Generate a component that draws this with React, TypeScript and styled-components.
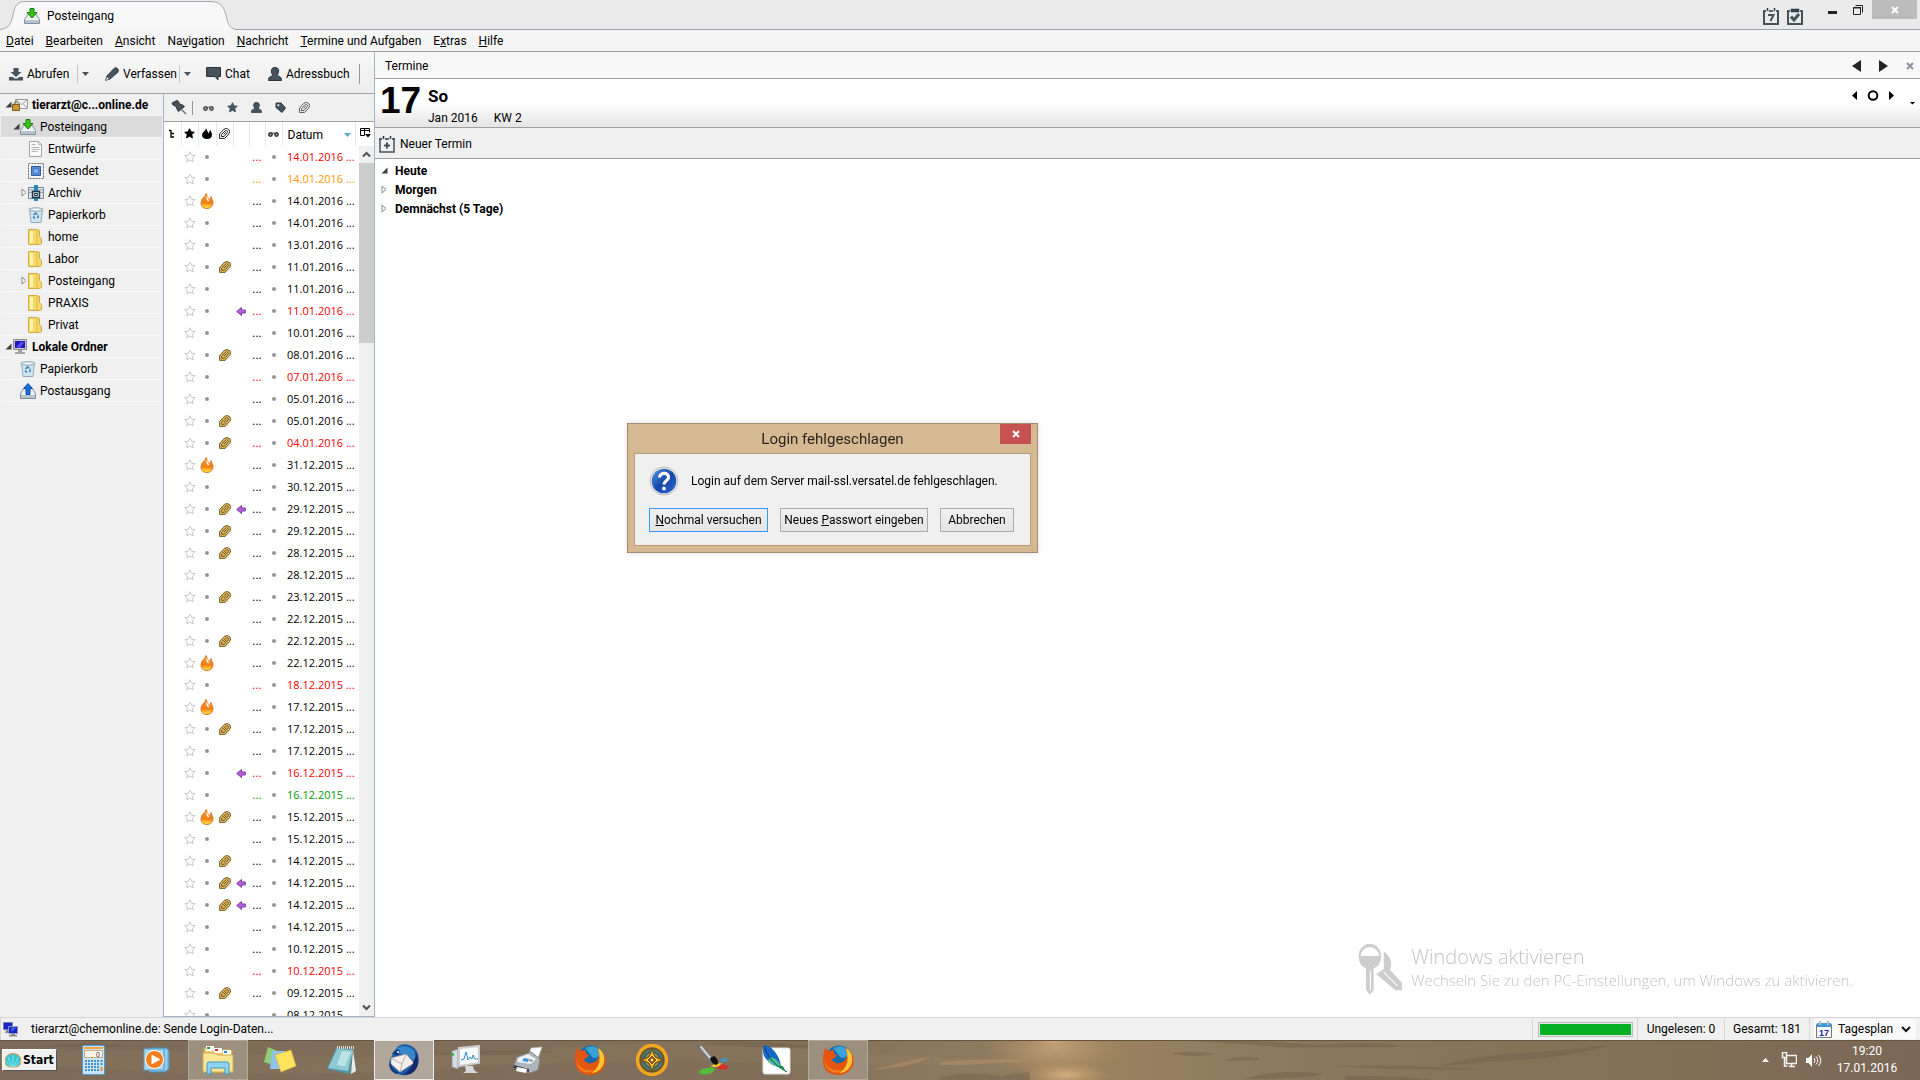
import React from "react";
import styled, { createGlobalStyle, css } from "styled-components";

const ui = `Roboto, "Open Sans", "Noto Sans", sans-serif`;
const light = `"Open Sans", "Noto Sans", sans-serif`;

const Global = createGlobalStyle`
  *, *::before, *::after { box-sizing: border-box; }
  html, body { margin: 0; height: 100%; overflow: hidden; }
  body { font: 12px/16px ${ui}; color: #000; background: #f0f0f0; }
  button, select { font: inherit; color: inherit; background: none; border: 0; padding: 0; margin: 0; }
  a { color: inherit; text-decoration: none; }
  svg { display: block; flex: none; }
`;

/* ---------- shell ---------- */
const Screen = styled.div`display: flex; flex-direction: column; height: 100vh;`;
const TabStrip = styled.header`
  display: flex; align-items: flex-start; justify-content: space-between;
  height: 30px; background: #eaeaea; border-bottom: 1px solid #98a4ac;
`;
const Tab = styled.button`
  position: relative; display: flex; align-items: center; gap: 7px;
  width: 236px; height: 30px; padding: 2px 0 0 24px; text-align: left;
  > svg:first-child { position: absolute; left: 0; top: 0; }
  > * { position: relative; }
`;
const WindowTools = styled.div`display: flex; align-items: flex-start; padding-right: 3px;`;
const CalTools = styled.div`display: flex; gap: 8px; padding: 8px 16px 0 0;`;
const Caption = styled.button<{ $close?: boolean }>`
  display: grid; place-items: center; height: 19px; width: ${p => (p.$close ? 45 : 26)}px;
  ${p => p.$close && css`background: #bcbcbc; margin-left: 1px;`}
`;
const MenuBar = styled.nav`
  display: flex; align-items: center; gap: 12px; height: 22px; padding: 0 6px;
  background: #f5f5f5; border-bottom: 1px solid #a0a0a0;
`;
const Main = styled.main`display: flex; flex: 1; min-height: 0; border-bottom: 1px solid #d7d7d7;`;
const MailSide = styled.section`
  display: flex; flex-direction: column; width: 375px; border-right: 1px solid #a3b3c9;
`;
const ToolBar = styled.div`
  display: flex; align-items: center; height: 42px; padding: 2px 0 0 9px;
  background: linear-gradient(#f8f8f8, #ededed); border-bottom: 1px solid #a0a0a0;
`;
const ToolButton = styled.button<{ $w: number }>`
  display: flex; align-items: center; gap: 4px; width: ${p => p.$w}px; white-space: nowrap;
`;
const DropButton = styled.button<{ $w: number }>`
  display: flex; align-items: center; padding-left: 4px; height: 18px; width: ${p => p.$w}px;
  border-left: 1px solid #c4c4c4;
`;
const Rule = styled.span<{ $h: number }>`width: 1px; height: ${p => p.$h}px; background: #999;`;
const MailBody = styled.div`display: flex; flex: 1; min-height: 0;`;

/* ---------- folders ---------- */
const Folders = styled.ul`
  width: 163px; margin: 0; padding: 0; list-style: none; background: #f0f0f0;
`;
const Folder = styled.li<{ $level: number; $on?: boolean; $bold?: boolean }>`
  display: flex; align-items: center; gap: 4px; height: 22px; margin: 0 1px;
  padding-left: ${p => 3 + p.$level * 8}px; white-space: nowrap;
  border-bottom: 1px solid #f7f7f7;
  background: ${p => (p.$on ? "#dbdbdb" : "transparent")};
  font-weight: ${p => (p.$bold ? 700 : 400)};
`;
const Twisty = styled.span`display: grid; place-items: center; width: 8px; margin-right: -4px; flex: none;`;

/* ---------- messages ---------- */
const Messages = styled.section`
  display: flex; flex-direction: column; flex: 1; min-width: 0; background: #fff;
  border-left: 1px solid #a3b3c9; border-bottom: 1px solid #a3b3c9;
`;
const FilterBar = styled.div`
  display: flex; align-items: center; gap: 10px; height: 28px; padding-left: 7px;
  background: #f0f0f0; border-bottom: 1px solid #a0a0a0;
`;
const FilterGroup = styled.div<{ $gap: number }>`display: flex; align-items: center; gap: ${p => p.$gap}px;`;
const ListArea = styled.div`display: flex; flex: 1; min-height: 0;`;
const ListClip = styled.div`flex: 1; min-width: 0; overflow: hidden;`;
const List = styled.table`
  width: 100%; table-layout: fixed; border-collapse: collapse;
  th { height: 24px; padding: 0 0 1px; font-weight: 400; border-right: 1px solid #dcebfa; }
  td { height: 22px; padding: 0; white-space: nowrap; overflow: hidden; }
  th > svg, td > svg { margin: auto; }
`;
const Col = styled.col<{ $w?: number }>`width: ${p => (p.$w ? `${p.$w}px` : "auto")};`;
const DateHead = styled.div`display: flex; align-items: center; justify-content: space-between; padding: 2px 4px 0 5px;`;
const Row = styled.tr<{ $c: string }>`
  color: ${p => p.$c};
  td:last-child { padding-left: 5px; font-family: ${light}; font-size: 11px; }
`;
const Dots = styled.td`text-align: center;`;
const Bullet = styled.span`display: block; width: 4px; height: 4px; margin: auto; border-radius: 50%; background: #969696;`;
const Rail = styled.div`display: flex; flex-direction: column; align-items: flex-end; width: 18px;`;
const Picker = styled.button`display: grid; place-items: center; width: 18px; height: 24px; padding-bottom: 3px;`;
const Scroll = styled.div`display: flex; flex-direction: column; flex: 1; width: 15px; background: #f0f0f0;`;
const ScrollButton = styled.button`display: grid; place-items: center; height: 17px;`;
const Track = styled.div`flex: 1;`;
const Thumb = styled.div`height: 21.5%; background: #cdcdcd;`;

/* ---------- calendar ---------- */
const Calendar = styled.aside`display: flex; flex-direction: column; flex: 1; background: #fff;`;
const CalHead = styled.div`
  display: flex; align-items: center; justify-content: space-between; height: 27px;
  padding: 2px 6px 0 10px; background: #f8f8f8; border-bottom: 1px solid #a0a0a0;
`;
const Arrows = styled.div<{ $gap: number }>`display: flex; align-items: center; gap: ${p => p.$gap}px;`;
const DayHead = styled.div`
  display: flex; align-items: flex-start; height: 49px; padding: 0 4px 0 5px;
  background: linear-gradient(#fff 50%, #e4e4e4); border-bottom: 1px solid #a0a0a0;
`;
const DayNumber = styled.div`width: 48px; font: 700 37px/43px "Liberation Sans", Arial, sans-serif;`;
const DayText = styled.div`flex: 1; padding-top: 6px;`;
const Weekday = styled.div`font-size: 17px; line-height: 22px; font-weight: 700;`;
const Month = styled.div`display: flex; gap: 16px; line-height: 22px;`;
const NewEvent = styled.button`
  display: flex; align-items: center; gap: 5px; height: 31px; padding: 2px 0 0 4px;
  background: #f0f0f0; border-bottom: 1px solid #a0a0a0;
`;
const Agenda = styled.ul`margin: 0; padding: 2px 0 0 5px; list-style: none; font-weight: 700;`;
const AgendaItem = styled.li`display: flex; align-items: center; gap: 11px; height: 19px;`;

/* ---------- status ---------- */
const Status = styled.footer`display: flex; align-items: center; height: 22px; background: #f0f0f0;`;
const StatusText = styled.div`flex: 1; padding-left: 10px;`;
const StatusCell = styled.div<{ $w: number }>`
  display: flex; align-items: center; justify-content: center; height: 22px;
  width: ${p => p.$w}px; border-left: 1px solid #d7d7d7;
`;
const Progress = styled.div`
  width: 95px; height: 15px; padding: 1px; border: 1px solid #bcbcbc; background: #e6e6e6;
  &::after { content: ""; display: block; height: 100%; background: #06b025; }
`;
const PlanButton = styled.button`
  display: flex; align-items: center; gap: 6px; height: 20px; width: 102px; padding-left: 2px;
  background: #fafafa; border-radius: 3px;
`;
const PlanArrow = styled.span`margin-left: 2px;`;

/* ---------- taskbar ---------- */
const TaskBar = styled.footer`
  position: relative; display: flex; align-items: center; height: 40px; overflow: hidden; color: #fff;
  background: linear-gradient(90deg, #7d6b57 0, #826f5a 40%, #907b60 52%, #98825f 58%, #8b7760 68%, #857358 80%, #7a6856 100%);
`;
const Water = styled.svg`position: absolute; inset: 0; width: 100%; height: 100%;`;
const StartButton = styled.button`
  position: relative; display: flex; align-items: center; gap: 2px; width: 55px; height: 22px; margin: 0 7px 0 2px;
  padding-left: 2px; color: #000; background: #f0f0f0;
  border: 1px solid; border-color: #fff #555 #555 #fff;
  font: 700 12px/16px "DejaVu Sans Condensed", "DejaVu Sans", sans-serif;
`;
const Tasks = styled.div`position: relative; display: flex; flex: 1; gap: 2px;`;
const Task = styled.button<{ $state?: "open" | "active" }>`
  display: grid; place-items: center; width: 60px; height: 40px;
  ${p => p.$state && css`
    border: 1px solid ${p.$state === "active" ? "#efece9" : "#b3a89a"};
    background: ${p.$state === "active" ? "#b1a69a" : "#9d8f7e"};
  `}
`;
const Tray = styled.div`position: relative; display: flex; align-items: center; gap: 8px; padding-right: 21px;`;
const TrayMore = styled.button`margin-right: 4px;`;
const Clock = styled.time`margin-left: 5px; width: 64px; line-height: 17px; text-align: center; white-space: nowrap;`;

/* ---------- overlays ---------- */
const Watermark = styled.div`
  position: fixed; right: 67px; bottom: 83px; display: flex; gap: 8px; color: #c4c4c4; pointer-events: none;
  font-family: ${light}; font-weight: 300; white-space: nowrap;
`;
const WaterTitle = styled.div`font-size: 20px; line-height: 28px;`;
const WaterText = styled.div`font-size: 15px; line-height: 18px;`;
const Dialog = styled.section`
  position: fixed; left: 627px; top: 423px; width: 411px; padding: 0 6px 6px;
  background: #d5b992; border: 1px solid #a68e6e; box-shadow: 0 0 5px rgba(0,0,0,.15);
`;
const DialogTitle = styled.h1`
  display: flex; justify-content: center; align-items: center; height: 29px; margin: 0;
  font-size: 15px; line-height: 20px; font-weight: 400; color: #2b2620;
`;
const DialogClose = styled.button`
  position: absolute; right: 6px; top: 0; display: grid; place-items: center; width: 31px; height: 20px; background: #c75050;
`;
const DialogBody = styled.div`padding: 12px 14px 13px; background: #f0f0f0; border: 1px solid #b89d78;`;
const Message = styled.p`display: flex; align-items: center; gap: 12px; margin: 0 0 12px; white-space: nowrap;`;
const Buttons = styled.div`display: flex; gap: 12px;`;
const DialogButton = styled.button<{ $w: number; $focus?: boolean }>`
  width: ${p => p.$w}px; height: 24px; white-space: nowrap;
  background: linear-gradient(#f0f0f0, #e5e5e5); border: 1px solid ${p => (p.$focus ? "#3399ff" : "#acacac")};
`;

/* ---------- icons ---------- */
const S = ({ w = 16, h = w, vb, children }: { w?: number; h?: number; vb?: string; children: React.ReactNode }) => (
  <svg width={w} height={h} viewBox={vb || `0 0 ${w} ${h}`} aria-hidden="true">{children}</svg>
);
const slate = "#46525c";
const TabShape = () => (
  <S w={236} h={30}><path d="M0 29.500C8 28.500 11 25 13 15C15 5 17 1.500 27 1.500H209C220 1.500 223 5 226 15C228 25 230 28.500 236 29.500V30H0Z" fill="#f8f8f8" /><path d="M0 29.500C8 28.500 11 25 13 15C15 5 17 1.500 27 1.500H209C220 1.500 223 5 226 15C228 25 230 28.500 236 29.500" fill="none" stroke="#a0abb8" /></S>
);
const Inbox = () => (
  <S><path d="M3.500 6.500h9l3 5v4H.5v-4z" fill="#e6ebf1" stroke="#8592a1" /><path d="M1 12h14v3H1z" fill="#b7c3cf" /><path d="M4 10h8l1 2H3z" fill="#fff" /><path d="M6 .5h4v4h3L8 10 3 4.500h3z" fill="#3cc414" stroke="#15800b" /></S>
);
const Outbox = () => (
  <S><path d="M3.500 5.500h9l3 5v5H.5v-5z" fill="#e8ecf1" stroke="#7e8c9d" /><path d="M1 12h14v3H1z" fill="#b7c3cf" /><path d="M4 9h8l1 3H3z" fill="#fff" /><path d="M6 11.500v-6H3.500L8 .5l4.500 5H10v6z" fill="#1c6fe0" stroke="#0c4aa5" /></S>
);
const Draft = () => (
  <S><path d="M1.500.5h9l3 3v12h-12z" fill="#fcfcfc" stroke="#a5a5a5" /><path d="M10.500.5v3h3M3.500 6.500h8M3.500 8.500h8M3.500 10.500h6M3.500 3.500h4" fill="none" stroke="#b5b5b5" /></S>
);
const Sent = () => (
  <S><path d="M.5.5h15v15H.5z" fill="#f4f4f4" stroke="#666" strokeDasharray="2 1" /><path d="M3.500 3.500h9v9h-9z" fill="#5b8edb" stroke="#2c62b4" /><circle cx="8" cy="8" r="3" fill="#7faceb" stroke="#416fb9" /></S>
);
const Archive = () => (
  <S><path d="M.5 2.500h15v11H.5z" fill="#dfe5ea" stroke="#788591" /><path d="M1 5h14M1 7.500h14" stroke="#98a4af" /><path d="M6 0h4v6H6zM6 12h4v4H6z" fill="#2689bf" /><path d="M4.500 6.500h7v6h-7z" fill="#cfd9e0" stroke="#22394a" strokeWidth="1.400" /><path d="M6.500 8.500h3v2h-3z" fill="#fff" stroke="#22394a" /></S>
);
const Trash = () => (
  <S><path d="M1.500 2h13l-1.500 13.500h-10z" fill="#cfe3ee" stroke="#93a9b5" /><ellipse cx="8" cy="2.500" rx="7" ry="1.700" fill="#edf6fa" stroke="#8fa3ae" /><path d="M5.500 8l2-2 2 1.500M10.500 8.500l-1 2.500M5 9.500l2 2" fill="none" stroke="#2b80bd" strokeWidth="1.500" /></S>
);
const FolderIcon = () => (
  <S><path d="M.5.500h8l3 1v6l2 2v5l-2 1H.5z" fill="#f5d868" stroke="#d3ab3f" /><path d="M2 2h3v12H2z" fill="#fff2b3" /><path d="M9 1.500v13.500" stroke="#e0b84a" /></S>
);
const Account = () => (
  <S><path d="M3.500 2.500h12v9h-12z" fill="#f4f4f4" stroke="#999" /><path d="M4 3l5.500 4.500L15 3M4 11l3.500-4M15 11l-3.500-4" fill="none" stroke="#9b9b9b" /><path d="M2 8V6q2-3 4 0v2" fill="none" stroke="#8a6d2e" /><path d="M.5 7.500h7v6h-7z" fill="#c79a3b" stroke="#7b5b1c" /></S>
);
const Computer = () => (
  <S><path d="M1.500.5h13v10h-13z" fill="#c9c9c9" stroke="#8d8d8d" /><path d="M3 2h10v7H3z" fill="#2414c7" /><path d="M4 8l5-5h3L8 9z" fill="#5c4ff2" /><path d="M6 11h4v2h3v2H3v-2h3z" fill="#a2a2a2" /></S>
);
const Open = () => <S w={7} h={7}><path d="M6.500.5v6h-6z" fill="#404040" /></S>;
const Closed = () => <S w={6} h={9}><path d="M1 1l4 3.500L1 8z" fill="#fff" stroke="#8a8a8a" /></S>;
const Tri = ({ d, w, h, c = "#222" }: { d: "l" | "r" | "d" | "u"; w: number; h: number; c?: string }) => (
  <S w={w} h={h}><path fill={c} d={{ l: `M${w} 0V${h}L0 ${h / 2}z`, r: `M0 0V${h}L${w} ${h / 2}z`, d: `M0 0H${w}L${w / 2} ${h}z`, u: `M0 ${h}H${w}L${w / 2} 0z` }[d]} /></S>
);
const starPath = "M6 .8l1.600 3.400 3.600.4-2.700 2.500.7 3.700L6 9l-3.200 1.800.7-3.700L.8 4.600l3.600-.4z";
const StarIcon = ({ fill, w = 11 }: { fill: string; w?: number }) => <S w={w} h={w} vb="0 0 12 12"><path d={starPath} fill={fill} stroke={fill === "#fff" ? "#c6c6c6" : fill} /></S>;
const Clip = ({ c, w = 12, back = "none" }: { c: string; w?: number; back?: string }) => (
  <S w={w} h={w} vb="0 0 12 12"><path d="M.6 11.400V6.600L5.400 1.300Q8.200-.4 10.600 1.600T10.700 6.500L6.200 11.400z" fill={back} stroke={c} strokeLinejoin="round" /><path d="M2.700 9.300V7.200L6.600 3.200Q8 2.300 9 3.300t0 1.700L5.500 9.300zM5 7l2.300-2.200" fill="none" stroke={c} /></S>
);
const Flame = () => (
  <S w={14} h={16}><defs><linearGradient id="fl" x2="0" y2="1"><stop stopColor="#f9a24a" /><stop offset=".6" stopColor="#f47a13" /><stop offset=".9" stopColor="#ffd33c" /></linearGradient></defs><path d="M6 .5C6 3 1 5 1 10c0 4 3 5.500 6 5.500s6-2 6-6C13 7 11.500 6 11 3.500 10.500 5 10 6 9.500 7 8 6 7.500 3 6 .5z" fill="url(#fl)" stroke="#dc7a28" /><path d="M7 2c.5 2 1 4 2.500 6-2 1-4-1-2.500-6z" fill="#fff3d4" /></S>
);
const FlameSmall = () => <S w={10} h={11}><path d="M4 0C4 3 0 4 0 7c0 2.500 2 4 5 4s5-1.500 5-4.500C10 5 9 4 8.500 2 7.500 3 7 4 7 5.500 5.500 4 5 2 4 0z" fill="#000" /></S>;
const Reply = () => <S w={10} h={9}><path d="M.7 4.500L5.500.5v2.500h3.800v3H5.500v2.500z" fill="#b65fe0" stroke="#7e3ea3" /></S>;
const Glasses = ({ c = slate }: { c?: string }) => <S w={11} h={6}><circle cx="2.500" cy="3.500" r="1.700" fill="#aaa" stroke={c} strokeWidth="1.500" /><circle cx="8.500" cy="3.500" r="1.700" fill="#aaa" stroke={c} strokeWidth="1.500" /><path d="M4 2.500q1.500-1 3 0" fill="none" stroke={c} /></S>;
const Person = ({ w }: { w: number }) => <S w={w} h={w} vb="0 0 14 14"><path d="M7 .5c3 0 4 2 3.500 4.500C10 7 9.500 7.500 9.500 8.500c1 1 4 1 4 4v1H.5v-1c0-3 3-3 4-4C4.500 7.500 4 7 3.500 5 3 2.500 4 .5 7 .5z" fill={slate} stroke="#2d363e" /></S>;
const Download = () => <S w={14} h={14}><path d="M4.500 1h5v4h3L7 10 1.500 5h3z" fill={slate} /><path d="M0 10h4l1.500 1.500h3L10 10h4v3.500H0z" fill={slate} /></S>;
const Pencil = () => <S w={14} h={14}><path d="M.7 13.300l1-4L9 1.500q2-1.500 3.500 0t.5 3.500L5 12z" fill={slate} stroke="#2d363e" /><path d="M1 13l1-3 2 2z" fill="#eee" /></S>;
const Chat = () => <S w={15} h={15}><path d="M.5 1.500h14v9h-2.500V14L9 10.500H.5z" fill={slate} stroke="#2d363e" /></S>;
const Pin = () => <S w={16} h={15}><path d="M1 3l5-2.500 1.500 1 1 2.500 3 1 2 1.500-6 5-1.500-2.500-1-2.500-3-1.500z" fill={slate} stroke="#2d363e" /><path d="M10 9l5 5" stroke="#6d767e" strokeWidth="1.500" /></S>;
const Tag = () => <S w={11} h={11}><path d="M1 1h5l4.500 5L7 10.500 1 5.500z" fill={slate} stroke="#2d363e" /><circle cx="3.300" cy="3.200" r="1" fill="#fff" /></S>;
const Thread = () => <S w={6} h={9}><path d="M0 1.500h2M2 1v7h3M2 4.500h3" fill="none" stroke="#000" strokeWidth="1.300" /></S>;
const PickerIcon = () => <S w={11} h={10}><path d="M.5 7.500v-7h9v4M.5 2.500h9M4.500.5v7H.5" fill="none" stroke="#000" /><path d="M5 6h6L8 9.500z" /></S>;
const Cal = ({ kind }: { kind: "7" | "+" | "check" }) => (
  <S w={16} h={17}><path d="M1 3v13h14V3" fill="none" stroke={slate} strokeWidth={kind === "+" ? 1.5 : 2} /><path d={kind === "check" ? "M0 3h3M13 3h3M4.500 1.500h7v2h-7z" : "M0 3h3M6 3h4M13 3h3M4.500 0v3M11.500 0v3"} fill={slate} stroke="#2f3a44" strokeWidth="1.500" />
    <path d={kind === "7" ? "M5 7h5.500L7.500 13" : kind === "+" ? "M8 6.500v6M5 9.500h6" : "M4 8.500l3 3.500 5-6"} fill="none" stroke={slate} strokeWidth={kind === "check" ? 3 : 2} /></S>
);
const X = ({ c, w = 8, sw = 2 }: { c: string; w?: number; sw?: number }) => <S w={w}><path d={`M1 1L${w - 1} ${w - 1}M${w - 1} 1L1 ${w - 1}`} stroke={c} strokeWidth={sw} /></S>;
const Chevron = ({ up }: { up?: boolean }) => <S w={9} h={7}><path d={up ? "M1 5.500L4.500 2 8 5.500" : "M1 1.500L4.500 5 8 1.500"} fill="none" stroke="#505050" strokeWidth="2" /></S>;
const Question = () => (
  <S w={30}><defs><linearGradient id="q" x2="1" y2="1"><stop stopColor="#5b9be0" /><stop offset=".5" stopColor="#1546aa" /><stop offset="1" stopColor="#2a68cc" /></linearGradient></defs><circle cx="15" cy="15" r="14" fill="#e9e9e9" stroke="#bbb" /><circle cx="15" cy="15" r="12.300" fill="url(#q)" /><path d="M10.500 11.500c.3-5.500 9.500-5.300 9 0-.3 3-4.500 3.500-4.500 7" fill="none" stroke="#fff" strokeWidth="3.200" /><circle cx="15" cy="22.500" r="1.900" fill="#fff" /></S>
);
const NetPcs = () => <S w={16} h={15}><path d="M.5.500h9v7h-9z" fill="#1726c9" stroke="#7486a8" /><path d="M3 8h4v3H2z" fill="#888" /><path d="M5.500 4.500h9v7h-9z" fill="#1726c9" stroke="#8d9bb5" /><path d="M8 6l5-1-4 5z" fill="#4664f5" /><path d="M8 12h4v1h2v1.500H6V13h2z" fill="#888" /></S>;
const PlanIcon = () => <S w={16} h={17}><path d="M.5 3.500h15v13H.5z" fill="#fff" stroke="#777" /><path d="M1 2h14v4H1z" fill="#3d9be0" /><path d="M4 0v4M12 0v4" stroke="#bbb" strokeWidth="2" /><text x="8" y="14.500" textAnchor="middle" fontFamily="Liberation Sans" fontWeight="700" fontSize="9" fill="#1a1aa6">17</text></S>;
const Keys = () => (
  <S w={46} h={54} vb="0 0 43 50"><g fill="#cdcdcd"><path d="M25 8c7 4 8 11 6 17l11 12v7h-6L18 29l7-5z" /><path d="M12 0a11.500 11.500 0 0 1 11 12q0 9-7 12v20l-4 5-4-5V24Q1 21 1 12A11.500 11.500 0 0 1 12 0z" stroke="#fff" /></g><path d="M3.500 12a8.500 8.500 0 0 1 17 0z" fill="#fff" /><path d="M12.500 26v18M25 27l13 13" stroke="#fff" /></S>
);
const Shell = () => <S w={16} h={15}><path d="M5 14q-5-1-5-6Q0 1 8 .5 16 1 16 8q0 5-5 6z" fill="#35c6cf" stroke="#e59a45" /><path d="M8 14V2M7 14L3 4M9 14l4-10M6 14L1 8M10 14l5-6" stroke="#9ff0f0" strokeWidth=".8" /></S>;

const Calculator = () => <S w={24} h={30}><rect x=".5" y=".5" width="22" height="29" rx="1.500" fill="#c8e4f6" stroke="#4f9ccd" /><path d="M2 3h19" stroke="#f5a13c" strokeWidth="2" /><path d="M2.500 5.500h18v7h-18z" fill="#fff6e6" stroke="#c4a884" /><text x="14" y="12" fontSize="7" fontFamily="Liberation Sans" fill="#333">0</text>{[16, 19, 22, 25].map(y => <path key={y} d={`M3 ${y}h14`} stroke="#4b93c5" strokeWidth="2" strokeDasharray="2 1" />)}<path d="M19.500 15v6" stroke="#4b93c5" strokeWidth="2" strokeDasharray="2 1" /><path d="M19.500 22v4" stroke="#f29023" strokeWidth="2" /></S>;
const Player = () => <S w={27} h={26}><path d="M6 1h18l2 3v18l-4 3H6z" fill="#7dbde0" stroke="#488eb7" /><path d="M23 3v20" stroke="#b7e0f3" /><path d="M1 2h20v21H1z" fill="#a7d8ef" stroke="#5aa3ca" /><circle cx="11.500" cy="12.500" r="9" fill="#f57c19" stroke="#fff" /><path d="M8.500 7.500v10l9-5z" fill="#fff" /></S>;
const Explorer = () => <S w={32} h={30}><path d="M2 3h8l2 2h18v22H2z" fill="#eccb6b" stroke="#c89e3a" /><path d="M4 1h8v5H4zM12 3h8v5h-8zM21 5h8v5h-8z" fill="#fff" /><path d="M5 2h3v2H5z" fill="#17a232" /><path d="M13 4h3v2h-3z" fill="#d8302c" /><path d="M22 6h3v2h-3z" fill="#2b83d1" /><path d="M1 8h12l2 2h16v17H1z" fill="#fae697" stroke="#d2ad4f" /><path d="M5 29V19q0-2 2-2h18q2 0 2 2v10h-4v-6H9v6z" fill="#8fd3f1" stroke="#4298c4" /></S>;
const Notes = () => <S w={33} h={28}><path d="M4 1l12 5-4 14L0 16z" fill="#91cf76" /><path d="M8 5h13l-2 18H6z" fill="#8fc2ee" /><path d="M11 9l16-5 5 16-15 6z" fill="#ffe45e" stroke="#d9b63a" strokeWidth=".6" /></S>;
const Notepad = () => <S w={32} h={30}><path d="M10 3l17 1-3 25L1 24z" fill="#4e97a8" /><path d="M11 4l16 1-5 21L2 23z" fill="#8fc9d2" /><path d="M16 6l9 1-6 14-8-1z" fill="#bce3e6" /><path d="M27 5l3 21-5 3z" fill="#e7eef0" /><path d="M11 2.500h17" stroke="#ddd" strokeWidth="3" strokeDasharray="1 1" /></S>;
const Bird = () => (
  <S w={34} h={34}>
    <path d="M9 6C12 0 22 0 27 5c6 5 6 15 2 21-4 6-12 8-18 5C4 29 1 22 3 16z" fill="#1c5ba8" />
    <path d="M5 11C8 3 19 1 25 6c6 4 7 12 5 18-2-5-5-9-10-11-5-3-10-3-15-2z" fill="#3a86cb" />
    <path d="M5 11l5-5 3 2-2 4z" fill="#12396f" /><circle cx="11" cy="9" r="1" fill="#fff" />
    <path d="M4 15l15-4 8 9-14 9-9-8z" fill="#f5efe9" stroke="#a39d97" strokeWidth=".6" /><path d="M4 15l11 6 4-10M15 21l-2 8" fill="none" stroke="#a7a09a" strokeWidth=".8" />
    <path d="M27 17q-2 10-11 14 12 2 15-10 1-9-4-13 3 4 0 9z" fill="#16296d" /><path d="M2 20q0 8 7 11l3-1q-7-3-8-9z" fill="#123a7c" />
  </S>
);
const Monitor = () => <S w={32} h={30}><path d="M2 6l6-2v20l-6-2z" fill="#d7dbe0" stroke="#8d949c" /><path d="M9 3l20-2v17l-20 3z" fill="#f7fbff" stroke="#ccc" strokeWidth="2" /><path d="M11 15l3-1 2-7 2 8 2-3 2 2 1-4 2 4h3" fill="none" stroke="#2b8bc5" /><path d="M15 21h8l1 4 4 3H13l3-2z" fill="#d5d8dc" /><path d="M2 8h2v3H2z" fill="#2cc32c" /></S>;
const Fax = () => <S w={32} h={28}><path d="M19 2l11-1-5 14-10-1z" fill="#fafafa" stroke="#bbb" strokeWidth=".6" /><path d="M5 11l14-5 9 7-2 11-8 3L1 22z" fill="#aeb5ba" stroke="#7f868b" /><path d="M6 12l10-4 8 5-5 5-14-2z" fill="#edf1f3" /><path d="M12 12l5 1-1 3-6-1z" fill="#3c94d0" /><path d="M18 13l3 1-1 2-3-1z" fill="#8b959c" /><path d="M2 19l15 4v3L1 22z" fill="#39424a" /><path d="M5 21l10 2-1 4-10-2z" fill="#fff" /></S>;
const Firefox = () => <S w={32}><circle cx="17" cy="15" r="13.500" fill="#1668aa" /><path d="M11 4q12-5 16 5-1 5-8 5z" fill="#36a2d8" /><path d="M2 8l1-4 4 3 5-1c-1 3 0 4 3 5-1 3-4 3-5 5 2 4 9 4 12 1 5-5 3-9 1-13 8 4 10 11 8 17-2 6-8 10-14 10C7 31 1 26 1 17c0-4 0-6 1-9z" fill="#e4550f" /><path d="M24 4c7 4 8 13 4 19-3 4-7 6-11 6 7-4 11-11 7-25z" fill="#fcc62f" /><path d="M2 15c2 9 10 13 18 11-7 6-17 1-18-11z" fill="#f5801f" /></S>;
const Compass = () => <S w={32}><circle cx="16" cy="16" r="14.500" fill="#477b7c" stroke="#f6a51c" strokeWidth="3.500" /><circle cx="16" cy="16" r="11.500" fill="none" stroke="#7c4e0d" strokeWidth="1.500" /><circle cx="16" cy="16" r="8" fill="#a48a3c" stroke="#2c5e66" strokeWidth="1.500" /><path d="M16 5l3 8 8 3-8 3-3 8-3-8-8-3 8-3z" fill="#e9a92a" stroke="#714a12" /><path d="M16 11l5 5-5 5-5-5z" fill="#8a4f16" stroke="#ffe064" /><circle cx="16" cy="16" r="1.500" fill="#ffe064" /></S>;
const Brush = () => <S w={32} h={32}><ellipse cx="9" cy="27" rx="8" ry="3" fill="#55bb3c" transform="rotate(-12 9 27)" /><ellipse cx="25" cy="23" rx="5" ry="2.500" fill="#dd2c2c" /><ellipse cx="26" cy="16" rx="3.500" ry="1.700" fill="#2e9edb" transform="rotate(-20 26 16)" /><path d="M12 22q8 3 12-3l-6 1z" fill="#f0d220" /><path d="M3 3l11 14" stroke="#777" strokeWidth="5" strokeLinecap="round" /><path d="M3 3l11 13" stroke="#d2d2d2" strokeWidth="2" strokeLinecap="round" /><path d="M12 14l4-2q6 4 3 9-6-1-7-7z" fill="#111" /></S>;
const Feather = () => <S w={30} h={32}><rect x="2" y="4" width="27" height="26" rx="2" fill="#fff" stroke="#ddd" /><path d="M3 1q7 1 11 7 5 6 6 15-8 0-14-7-6-6-3-15z" fill="#1768c0" /><path d="M9 13q8 1 11 10-8 0-13-6z" fill="#4dbd8c" /><path d="M3 2q5 17 23 26" fill="none" stroke="#0c3f8c" /><path d="M15 21l10 7-3-6z" fill="#219151" /></S>;
const Net = () => <S w={16}><path d="M5.500 3.500h10v8h-10zM8 14.500h6M10.500 12v2M1.500.5h4v5h-4zM3.500 6v8h3" fill="none" stroke="#f3f3f3" strokeWidth="1.500" /></S>;
const Speaker = () => <S w={17} h={15}><path d="M1 5h2.500L7 1v13L3.500 10H1z" fill="#fff" /><path d="M9 5q2 2.500 0 5M11 3.500q3.500 4 0 8M13.500 2q4.500 5.500 0 11" fill="none" stroke="#fff" /></S>;

/* ---------- data ---------- */
const menus: [string, string, string][] = [["", "D", "atei"], ["", "B", "earbeiten"], ["", "A", "nsicht"], ["Na", "v", "igation"], ["", "N", "achricht"], ["", "T", "ermine und Aufgaben"], ["E", "x", "tras"], ["", "H", "ilfe"]];

type F = { n: string; i: React.ReactNode; l: number; t?: "o" | "c"; on?: boolean; b?: boolean };
const folders: F[] = [
  { n: "tierarzt@c...online.de", i: <Account />, l: 0, t: "o", b: true },
  { n: "Posteingang", i: <Inbox />, l: 1, t: "o", on: true },
  { n: "Entwürfe", i: <Draft />, l: 2 },
  { n: "Gesendet", i: <Sent />, l: 2 },
  { n: "Archiv", i: <Archive />, l: 2, t: "c" },
  { n: "Papierkorb", i: <Trash />, l: 2 },
  { n: "home", i: <FolderIcon />, l: 2 },
  { n: "Labor", i: <FolderIcon />, l: 2 },
  { n: "Posteingang", i: <FolderIcon />, l: 2, t: "c" },
  { n: "PRAXIS", i: <FolderIcon />, l: 2 },
  { n: "Privat", i: <FolderIcon />, l: 2 },
  { n: "Lokale Ordner", i: <Computer />, l: 0, t: "o", b: true },
  { n: "Papierkorb", i: <Trash />, l: 1 },
  { n: "Postausgang", i: <Outbox />, l: 1 },
];

/* date, then flags: r/o/g text colour, f flame, c attachment, a replied */
const mails = `14.01.2016 r|14.01.2016 o|14.01.2016 f|14.01.2016|13.01.2016|11.01.2016 c|11.01.2016|11.01.2016 ra|10.01.2016|08.01.2016 c|07.01.2016 r|05.01.2016|05.01.2016 c|04.01.2016 rc|31.12.2015 f|30.12.2015|29.12.2015 ca|29.12.2015 c|28.12.2015 c|28.12.2015|23.12.2015 c|22.12.2015|22.12.2015 c|22.12.2015 f|18.12.2015 r|17.12.2015 f|17.12.2015 c|17.12.2015|16.12.2015 ra|16.12.2015 g|15.12.2015 fc|15.12.2015|14.12.2015 c|14.12.2015 ca|14.12.2015 ca|14.12.2015|10.12.2015|10.12.2015 r|09.12.2015 c|08.12.2015`
  .split("|").map(m => { const [date, flags = ""] = m.split(" "); return { date, flags }; });
const tint = (f: string) => (f.includes("r") ? "#f00" : f.includes("o") ? "#f90" : f.includes("g") ? "#009900" : "#000");

const tasks: { n: string; i: React.ReactNode; s?: "open" | "active" }[] = [
  { n: "Rechner", i: <Calculator /> }, { n: "Media Player", i: <Player /> }, { n: "Explorer", i: <Explorer />, s: "open" },
  { n: "Kurznotizen", i: <Notes /> }, { n: "Editor", i: <Notepad /> }, { n: "Thunderbird", i: <Bird />, s: "active" },
  { n: "Systemmonitor", i: <Monitor /> }, { n: "Fax", i: <Fax /> }, { n: "Firefox", i: <Firefox /> },
  { n: "Kompass", i: <Compass /> }, { n: "Malen", i: <Brush /> }, { n: "Feder", i: <Feather /> }, { n: "Firefox-Fenster", i: <Firefox />, s: "open" },
];

export default function App() {
  return (
    <Screen>
      <Global />
      <TabStrip>
        <Tab><TabShape /><Inbox /><span>Posteingang</span></Tab>
        <WindowTools>
          <CalTools><button aria-label="Kalender"><Cal kind="7" /></button><button aria-label="Aufgaben"><Cal kind="check" /></button></CalTools>
          <Caption aria-label="Minimieren"><S w={9} h={9}><path d="M0 6h9v3H0z" fill="#222" /></S></Caption>
          <Caption aria-label="Wiederherstellen"><S w={10} h={10}><path d="M.5 3h7v6.500h-7z" fill="none" stroke="#222" /><path d="M0 2.500h8M2.500.5h7v7" fill="none" stroke="#222" /></S></Caption>
          <Caption $close aria-label="Schließen"><X c="#fff" /></Caption>
        </WindowTools>
      </TabStrip>
      <MenuBar>{menus.map(([a, u, b]) => <a href="#" key={a + u + b}>{a}<u>{u}</u>{b}</a>)}</MenuBar>

      <Main>
        <MailSide>
          <ToolBar>
            <ToolButton $w={68}><Download />Abrufen</ToolButton>
            <DropButton $w={28} aria-label="Abrufen-Menü"><Tri d="d" w={7} h={4} c={slate} /></DropButton>
            <ToolButton $w={74}><Pencil />Verfassen</ToolButton>
            <DropButton $w={27} aria-label="Verfassen-Menü"><Tri d="d" w={7} h={4} c={slate} /></DropButton>
            <ToolButton $w={62}><Chat />Chat</ToolButton>
            <ToolButton $w={91}><Person w={14} />Adressbuch</ToolButton>
            <Rule $h={20} />
          </ToolBar>
          <MailBody>
            <Folders>
              {folders.map((f, i) => (
                <Folder key={i} $level={f.l} $on={f.on} $bold={f.b}>
                  <Twisty>{f.t === "o" ? <Open /> : f.t === "c" ? <Closed /> : null}</Twisty>
                  {f.i}{f.n}
                </Folder>
              ))}
            </Folders>
            <Messages>
              <FilterBar>
                <FilterGroup $gap={5}><button aria-label="Anheften"><Pin /></button><Rule $h={14} /></FilterGroup>
                <FilterGroup $gap={13}>
                  <button aria-label="Ungelesen"><Glasses /></button><button aria-label="Gekennzeichnet"><StarIcon fill={slate} /></button>
                  <button aria-label="Kontakt"><Person w={11} /></button><button aria-label="Schlagwort"><Tag /></button>
                  <button aria-label="Anhang"><Clip c={slate} w={11} /></button>
                </FilterGroup>
              </FilterBar>
              <ListArea>
                <ListClip>
                  <List>
                    <colgroup><Col $w={17} /><Col $w={17} /><Col $w={18} /><Col $w={17} /><Col $w={16} /><Col $w={16} /><Col $w={17} /><Col /></colgroup>
                    <thead><tr>
                      <th aria-label="Thema"><Thread /></th><th aria-label="Stern"><StarIcon fill="#000" /></th><th aria-label="Junk"><FlameSmall /></th>
                      <th aria-label="Anhang"><Clip c="#111" w={11} /></th><th /><th /><th aria-label="Gelesen"><Glasses c="#333" /></th>
                      <th><DateHead>Datum<Tri d="d" w={7} h={4} c="#5fa9c9" /></DateHead></th>
                    </tr></thead>
                    <tbody>
                      {mails.map((m, i) => (
                        <Row key={i} $c={tint(m.flags)}>
                          <td /><td><StarIcon fill="#fff" w={12} /></td>
                          <td>{m.flags.includes("f") ? <Flame /> : <Bullet />}</td>
                          <td>{m.flags.includes("c") && <Clip c="#7d6023" back="#d8b565" />}</td>
                          <td>{m.flags.includes("a") && <Reply />}</td>
                          <Dots>...</Dots>
                          <td><Bullet /></td>
                          <td>{m.date} ...</td>
                        </Row>
                      ))}
                    </tbody>
                  </List>
                </ListClip>
                <Rail>
                  <Picker aria-label="Spalten wählen"><PickerIcon /></Picker>
                  <Scroll>
                    <ScrollButton aria-label="Nach oben"><Chevron up /></ScrollButton>
                    <Track><Thumb /></Track>
                    <ScrollButton aria-label="Nach unten"><Chevron /></ScrollButton>
                  </Scroll>
                </Rail>
              </ListArea>
            </Messages>
          </MailBody>
        </MailSide>

        <Calendar>
          <CalHead>Termine
            <Arrows $gap={18}>
              <button aria-label="Zurück"><Tri d="l" w={9} h={12} /></button>
              <button aria-label="Weiter"><Tri d="r" w={9} h={12} /></button>
              <button aria-label="Bereich schließen"><X c="#8a93a0" /></button>
            </Arrows>
          </CalHead>
          <DayHead>
            <DayNumber>17</DayNumber>
            <DayText><Weekday>So</Weekday><Month><span>Jan 2016</span><span>KW 2</span></Month></DayText>
            <Arrows $gap={11}>
              <S w={64} h={32}><path d="M5 12v9L0 16.500zM37 12v9l5-4.500zM58 23h5l-2.500 2.500z" /><circle cx="21" cy="16.500" r="4.300" fill="none" stroke="#000" strokeWidth="2" /></S>
            </Arrows>
          </DayHead>
          <NewEvent><Cal kind="+" />Neuer Termin</NewEvent>
          <Agenda>
            <AgendaItem><Twisty><Open /></Twisty>Heute</AgendaItem>
            <AgendaItem><Twisty><Closed /></Twisty>Morgen</AgendaItem>
            <AgendaItem><Twisty><Closed /></Twisty>Demnächst (5 Tage)</AgendaItem>
          </Agenda>
        </Calendar>
      </Main>

      <Status>
        <StatusCell $w={21}><NetPcs /></StatusCell>
        <StatusText>tierarzt@chemonline.de: Sende Login-Daten...</StatusText>
        <StatusCell $w={105}><Progress role="progressbar" aria-label="Fortschritt" /></StatusCell>
        <StatusCell $w={87}>Ungelesen: 0</StatusCell>
        <StatusCell $w={85}>Gesamt: 181</StatusCell>
        <StatusCell $w={111}><PlanButton><PlanIcon />Tagesplan<PlanArrow><S w={10} h={7}><path d="M1 1l4 4 4-4" fill="none" stroke="#111" strokeWidth="2" /></S></PlanArrow></PlanButton></StatusCell>
      </Status>

      <TaskBar>
        <Water viewBox="0 0 1920 40" preserveAspectRatio="none" aria-hidden="true">
          <defs><radialGradient id="sun"><stop stopColor="#d6b384" stopOpacity=".95" /><stop offset="1" stopColor="#c79a62" stopOpacity="0" /></radialGradient></defs>
          <path d="M0 14q120-8 260 0t300-6 300 6l160 6q-120 8-260 3T420 30 0 22z" fill="#a08a6b" opacity=".15" />
          <ellipse cx="1055" cy="8" rx="70" ry="30" fill="url(#sun)" opacity=".7" /><ellipse cx="1054" cy="0" rx="20" ry="6" fill="url(#sun)" /><ellipse cx="1066" cy="35" rx="46" ry="13" fill="url(#sun)" />
          <path d="M940 22q60-5 90-1-50 4-90 4zM870 30l60-14q-10 10-60 14z" fill="#c09c6e" opacity=".4" />
          <g fill="#6f5d49" opacity=".4"><path d="M940 37q30-6 60-1l30-4v8H940zM1195 2q60-3 120 3 70-5 85 2-80 0-110 1-50-5-95-6zM1172 13q20-3 44 1-20 4-44 0zM1232 18q15-3 27 0v2l-36 1zM1265 34q30-4 58 0-20 5-80 5zM1330 26q60-2 150 3-70 2-150-3zM1440 26q40-12 100-14 50-4 70-7-30 10-80 14t-90 7zM1345 36q60 0 90 4h-90zM700 4q40-4 90 0t80 3q-60 4-170-3zM40 6q50-5 90 0-40 3-90 0zM430 14q60-6 130-2-60 5-130 2z" /></g>
          <path d="M0 .5h1920" stroke="#66543f" />
        </Water>
        <StartButton><Shell />Start</StartButton>
        <Tasks>{tasks.map(t => <Task key={t.n} $state={t.s} aria-label={t.n}>{t.i}</Task>)}</Tasks>
        <Tray>
          <TrayMore aria-label="Ausgeblendete Symbole"><Tri d="u" w={7} h={4} c="#fff" /></TrayMore>
          <Net /><Speaker />
          <Clock>19:20<br />17.01.2016</Clock>
        </Tray>
      </TaskBar>

      <Watermark><Keys /><div><WaterTitle>Windows aktivieren</WaterTitle><WaterText>Wechseln Sie zu den PC-Einstellungen, um Windows zu aktivieren.</WaterText></div></Watermark>

      <Dialog role="dialog" aria-label="Login fehlgeschlagen">
        <DialogTitle>Login fehlgeschlagen</DialogTitle>
        <DialogClose aria-label="Dialog schließen"><X c="#fff" /></DialogClose>
        <DialogBody>
          <Message><Question />Login auf dem Server mail-ssl.versatel.de fehlgeschlagen.</Message>
          <Buttons>
            <DialogButton $w={119} $focus><u>N</u>ochmal versuchen</DialogButton>
            <DialogButton $w={148}>Neues <u>P</u>asswort eingeben</DialogButton>
            <DialogButton $w={74}>Abbrechen</DialogButton>
          </Buttons>
        </DialogBody>
      </Dialog>
    </Screen>
  );
}
